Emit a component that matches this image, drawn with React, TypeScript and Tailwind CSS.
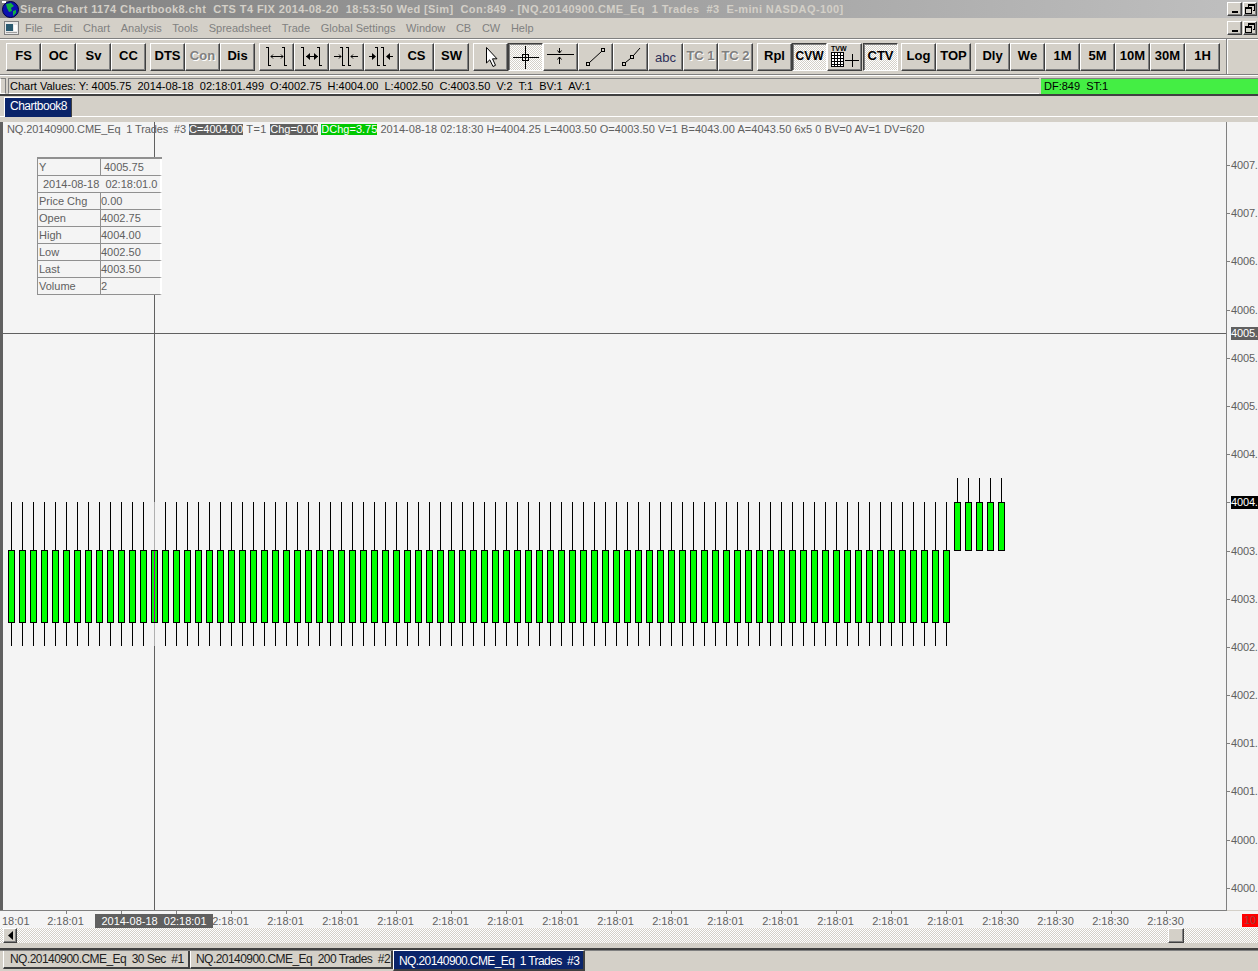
import React from 'react';

const FONT = "font-['Liberation_Sans',Arial,sans-serif]";
const DITHER = 'bg-[image:repeating-conic-gradient(#d4d0c8_0_25%,#ffffff_0_50%)] bg-[length:2px_2px]';
const RAISED = 'border border-t-white border-l-white border-r-[#404040] border-b-[#404040] shadow-[inset_-1px_-1px_0_#808080] bg-[#d4d0c8]';

const menuItems = ['File', 'Edit', 'Chart', 'Analysis', 'Tools', 'Spreadsheet', 'Trade', 'Global Settings', 'Window', 'CB', 'CW', 'Help'];

const priceTicks = ['4007.', '4007.', '4006.', '4006.', '4005.', '4005.', '4004.', '4004.', '4003.', '4003.', '4002.', '4002.', '4001.', '4001.', '4000.', '4000.'];

// the two empty ones sit behind the crosshair's date label
const timeTicks = ['2:18:01', '', '', '2:18:01', '2:18:01', '2:18:01', '2:18:01', '2:18:01', '2:18:01', '2:18:01', '2:18:01', '2:18:01', '2:18:01', '2:18:01', '2:18:01', '2:18:01', '2:18:01', '2:18:30', '2:18:30', '2:18:30', '2:18:30'];

const tableRows = [
  ['Price Chg', '0.00'],
  ['Open', '4002.75'],
  ['High', '4004.00'],
  ['Low', '4002.50'],
  ['Last', '4003.50'],
  ['Volume', '2'],
];

const lowCandles = Array.from({ length: 86 }, (_, i) => 11 + i * 11);
const highCandles = Array.from({ length: 5 }, (_, i) => 957 + i * 11);

function Btn({ children, pressed, tone = 'font-bold text-black' }: { children: React.ReactNode; pressed?: boolean; tone?: string }) {
  return (
    <div
      className={`relative flex h-[28px] w-[35px] shrink-0 items-center justify-center whitespace-nowrap text-[13px] leading-none ${
        pressed
          ? `border border-t-[#404040] border-l-[#404040] border-r-white border-b-white shadow-[inset_1px_1px_0_#808080] ${DITHER}`
          : RAISED
      } ${tone}`}
    >
      {children}
    </div>
  );
}

function Label({ children }: { children: React.ReactNode }) {
  return <span className="pb-[3px]">{children}</span>;
}

function Icon({ children }: { children: React.ReactNode }) {
  return (
    <svg width="33" height="26" viewBox="0 0 33 26" fill="none" stroke="black" shapeRendering="crispEdges">
      {children}
    </svg>
  );
}

function Bars({ x1, x2 }: { x1: number; x2: number }) {
  return (
    <>
      <path d={`M${x1 + 0.5} 3V22M${x1 - 2} 3.5H${x1}M${x1 + 1} 21.5H${x1 + 3}`} />
      <path d={`M${x2 + 0.5} 3V22M${x2 - 2} 3.5H${x2}M${x2 + 1} 21.5H${x2 + 3}`} />
    </>
  );
}

function WindowButtons() {
  return (
    <div className="flex gap-px">
      <div className={`flex h-[14px] w-[15px] items-end justify-center pb-[2px] ${RAISED}`}>
        <div className="h-[2px] w-[6px] bg-black" />
      </div>
      <div className={`flex h-[14px] w-[14px] items-center justify-center ${RAISED}`}>
        <svg width="10" height="10" viewBox="0 0 10 10" fill="none" stroke="black" shapeRendering="crispEdges">
          <path d="M3.5 2.5V0.5H9.5V6.5H7.5M3 1.5H9" />
          <rect x="0.5" y="3.5" width="6" height="6" />
          <path d="M1 4.5H6" />
        </svg>
      </div>
    </div>
  );
}

function Toolbar() {
  const dim = 'font-bold text-[#808080] [text-shadow:1px_1px_0_#ffffff]';
  return (
    <div className="flex h-[37px] shrink-0 items-start border-y border-[#808080] pl-[6px] shadow-[inset_0_1px_0_#ffffff,0_1px_0_#ffffff]">
      <div className="mt-[4px] flex">
        <Btn><Label>FS</Label></Btn>
        <Btn><Label>OC</Label></Btn>
        <Btn><Label>Sv</Label></Btn>
        <Btn><Label>CC</Label></Btn>
      </div>
      <div className="ml-[4px] mt-[4px] flex">
        <Btn><Label>DTS</Label></Btn>
        <Btn tone={dim}><Label>Con</Label></Btn>
        <Btn><Label>Dis</Label></Btn>
      </div>
      <div className="ml-[4px] mt-[4px] flex">
        <Btn>
          <Icon>
            <Bars x1={8} x2={24} />
            <path d="M11 12.5H23M13 10.5L11 12.5L13 14.5M21 10.5L23 12.5L21 14.5" shapeRendering="auto" />
          </Icon>
        </Btn>
        <Btn>
          <Icon>
            <Bars x1={8} x2={24} />
            <path d="M11 12.5H23" strokeWidth="1" />
            <path d="M11 12.5L15 9V16ZM23 12.5L19 9V16Z" fill="black" stroke="none" shapeRendering="auto" />
          </Icon>
        </Btn>
        <Btn>
          <Icon>
            <path d="M12.5 3V22M10 3.5H12M13 21.5H15M18.5 3V22M16 3.5H18M19 21.5H21" />
            <path d="M4 12.5H11M9 10.5L11 12.5L9 14.5M28 12.5H21M23 10.5L21 12.5L23 14.5" shapeRendering="auto" />
          </Icon>
        </Btn>
        <Btn>
          <Icon>
            <path d="M12.5 3V22M10 3.5H12M13 21.5H15M18.5 3V22M16 3.5H18M19 21.5H21" />
            <path d="M4 12.5H8M24 12.5H28" />
            <path d="M11 12.5L7 9V16ZM21 12.5L25 9V16Z" fill="black" stroke="none" shapeRendering="auto" />
          </Icon>
        </Btn>
        <Btn><Label>CS</Label></Btn>
        <Btn><Label>SW</Label></Btn>
      </div>
      <div className="ml-[4px] mt-[4px] flex">
        <Btn>
          <Icon>
            <path d="M12.5 3.5V19L15.8 15.8L19 22.5L21.5 21.3L18.5 14.8H23Z" fill="white" strokeWidth="1" shapeRendering="auto" />
          </Icon>
        </Btn>
        <Btn pressed>
          <Icon>
            <path d="M4 13.5H30M16.5 2V25" />
            <rect x="13.5" y="10.5" width="6" height="6" />
          </Icon>
        </Btn>
        <Btn>
          <Icon>
            <path d="M3 10.5H30M15.5 4V9M15.5 13V20" />
            <path d="M13.5 6.5L15.5 9L17.5 6.5M13.5 15.5L15.5 13L17.5 15.5" shapeRendering="auto" />
          </Icon>
        </Btn>
        <Btn>
          <Icon>
            <rect x="7.5" y="18.5" width="3" height="3" />
            <rect x="22.5" y="4.5" width="3" height="3" />
            <path d="M10.5 18.5L22.5 7.5" shapeRendering="auto" />
          </Icon>
        </Btn>
        <Btn>
          <Icon>
            <rect x="8.5" y="18.5" width="3" height="3" />
            <rect x="16.5" y="11.5" width="3" height="3" />
            <path d="M11.5 18.5L16.5 14.5M19.5 11.5L26 4" shapeRendering="auto" />
          </Icon>
        </Btn>
        <Btn tone="font-normal text-[#30305a]">abc</Btn>
        <Btn tone={dim}><Label>TC 1</Label></Btn>
        <Btn tone={dim}><Label>TC 2</Label></Btn>
      </div>
      <div className="ml-[4px] mt-[4px] flex">
        <Btn><Label>Rpl</Label></Btn>
        <Btn pressed>
          <span className="pb-[2px] text-[12px]">CVW</span>
        </Btn>
        <Btn>
          <svg width="33" height="26" viewBox="0 0 33 26" fill="none" stroke="black" shapeRendering="crispEdges">
            <text x="3" y="6.5" fontSize="7" fontWeight="700" fill="black" stroke="none" fontFamily="Liberation Sans">TVW</text>
            <rect x="3.5" y="8.5" width="12" height="14" fill="white" />
            <path d="M3 11.5H16M3 14.5H16M3 17.5H16M3 20.5H16M6.5 9V23M9.5 9V23M12.5 9V23" />
            <path d="M17 16.5H31M24.5 10V23" />
          </svg>
        </Btn>
      </div>
      <div className="ml-px mt-[4px] flex">
        <Btn pressed><Label>CTV</Label></Btn>
      </div>
      <div className="ml-[3px] mt-[4px] flex">
        <Btn><Label>Log</Label></Btn>
        <Btn><Label>TOP</Label></Btn>
      </div>
      <div className="ml-[4px] mt-[4px] flex">
        <Btn><Label>Dly</Label></Btn>
        <Btn><Label>We</Label></Btn>
        <Btn><Label>1M</Label></Btn>
        <Btn><Label>5M</Label></Btn>
        <Btn><Label>10M</Label></Btn>
        <Btn><Label>30M</Label></Btn>
        <Btn><Label>1H</Label></Btn>
      </div>
      <div className="ml-[6px] w-[2px] self-stretch border-l border-[#808080] bg-white" />
    </div>
  );
}

function ChartValues() {
  return (
    <div className="h-[21px] shrink-0 pt-[3px]">
      <div className="flex h-[18px] border-b-2 border-[#404040]">
        <div className="w-[6px] border border-t-[#808080] border-l-white border-r-[#808080] border-b-white" />
        <div className="ml-[2px] flex w-[1031px] items-center border-t border-l border-[#808080] border-b border-b-white pl-[1px] whitespace-pre text-[11px] leading-none text-black">
          Chart Values: Y: 4005.75  2014-08-18  02:18:01.499  O:4002.75  H:4004.00  L:4002.50  C:4003.50  V:2  T:1  BV:1  AV:1
        </div>
        <div className="ml-[2px] flex flex-1 items-center border-t border-[#808080] bg-[#44ee44] pl-[3px] whitespace-pre text-[11px] leading-none text-black">
          DF:849  ST:1
        </div>
      </div>
    </div>
  );
}

function PlotOverlay() {
  return (
    <svg className="absolute -left-[3px] top-0" width="1226" height="788" viewBox="0 122 1226 788" fill="none" shapeRendering="crispEdges">
      <path d="M3 333.5H1226" stroke="#606060" />
      <path d="M154.5 122V910" stroke="#606060" />
      {lowCandles.map((x) =>
        x === 154 ? (
          <g key={x}>
            <path d="M154.5 502V646" stroke="#b0b0b0" />
            <rect x="151.5" y="550.5" width="6" height="72" fill="#00ff00" stroke="black" />
            <path d="M154.5 551V622" stroke="#a000a0" />
          </g>
        ) : (
          <g key={x}>
            <path d={`M${x + 0.5} 502V646`} stroke="black" />
            <rect x={x - 2.5} y="550.5" width="6" height="72" fill="#00ff00" stroke="black" />
          </g>
        ),
      )}
      {highCandles.map((x) => (
        <g key={x}>
          <path d={`M${x + 0.5} 478V502`} stroke="black" />
          <rect x={x - 2.5} y="502.5" width="6" height="48" fill="#00ff00" stroke="black" />
        </g>
      ))}
    </svg>
  );
}

function ValuesTable() {
  const left = 'flex h-[17px] w-[63px] shrink-0 items-center border-r border-b border-[#909090] pl-[1px]';
  const right = 'flex h-[17px] flex-1 items-center border-r-2 border-b border-r-white border-b-[#909090]';
  return (
    <div className="absolute left-[34px] top-[35px] w-[125px] border-t-2 border-l border-[#909090] bg-[#f4f4f4] text-[11px] leading-none text-[#606060]">
      <div className="flex">
        <div className={left}>Y</div>
        <div className={`${right} pl-[3px]`}>4005.75</div>
      </div>
      <div className={`${right} whitespace-pre pl-[5px]`}>2014-08-18  02:18:01.0</div>
      {tableRows.map(([label, value]) => (
        <div key={label} className="flex">
          <div className={left}>{label}</div>
          <div className={right}>{value}</div>
        </div>
      ))}
    </div>
  );
}

function Chart() {
  return (
    <div className="flex h-[789px] shrink-0 flex-col">
      <div className="flex h-[788px]">
        <div className="relative w-[1226px] overflow-hidden border-l-[3px] border-[#606060] bg-[#f4f4f4]">
          <PlotOverlay />
          <div className="relative flex h-[15px] items-center pl-[4px] whitespace-pre text-[11px] leading-none text-[#606060]">
            <span className="tracking-[-0.12px]">NQ.20140900.CME_Eq  1 Trades  #3 </span>
            <span className="bg-[#606060] text-white">C=4004.00</span>
            <span className="tracking-[0.4px]"> T=1 </span>
            <span className="bg-[#606060] text-white">Chg=0.00</span>
            <span> </span>
            <span className="bg-[#00c800] text-white">DChg=3.75</span>
            <span className="tracking-[0.04px]"> 2014-08-18 02:18:30 H=4004.25 L=4003.50 O=4003.50 V=1 B=4043.00 A=4043.50 6x5 0 BV=0 AV=1 DV=620</span>
          </div>
          <ValuesTable />
        </div>
        <div className="relative flex-1 overflow-hidden border-l border-[#808080] bg-[#f4f4f4] pl-[4px] pt-[37px] text-[11px] text-[#606060] tracking-[-0.15px]">
          {priceTicks.map((p, i) => (
            <div key={i} className="relative flex h-[48.2px] items-start leading-[13px]">
              <div className="absolute -left-[4px] top-[6px] h-px w-[3px] bg-[#808080]" />
              <span className={i === 7 ? 'bg-black text-white' : ''}>{p}</span>
            </div>
          ))}
          <div className="absolute left-[4px] top-[205px] bg-[#606060] leading-[13px] text-white">4005.</div>
        </div>
      </div>
      <div className="h-px w-[1227px] bg-[#808080]" />
    </div>
  );
}

function TimeAxis() {
  return (
    <div className="relative flex h-[17px] shrink-0 overflow-hidden bg-[#f4f4f4] pl-[38px] text-[11px] leading-none text-[#606060]">
      <span className="absolute left-[2px] top-[5px]">18:01</span>
      {timeTicks.map((t, i) => (
        <div key={i} className="relative flex h-full w-[55px] shrink-0 justify-center pt-[5px]">
          <div className="absolute left-1/2 top-0 h-[3px] w-px bg-[#808080]" />
          {t}
        </div>
      ))}
      <div className="absolute left-[95px] top-[3px] flex h-[14px] w-[118px] items-center justify-center whitespace-pre bg-[#606060] text-white">
        2014-08-18  02:18:01
      </div>
      <div className="absolute left-[1242px] top-[3px] flex h-[13px] w-[16px] items-center justify-center bg-[#ff0000] text-[#a04040]">10</div>
    </div>
  );
}

function ScrollBar() {
  return (
    <div className={`relative h-[15px] shrink-0 ${DITHER}`}>
      <div className={`absolute left-[3px] top-0 flex h-[15px] w-[14px] items-center justify-center ${RAISED}`}>
        <svg width="5" height="9" viewBox="0 0 5 9" fill="black">
          <path d="M5 0V9L0 4.5Z" />
        </svg>
      </div>
      <div className={`absolute left-[1168px] top-0 h-[15px] w-[16px] ${RAISED}`} />
    </div>
  );
}

function BottomTabs() {
  return (
    <div className="flex flex-1 items-start border-t-2 border-[#404040] pl-[3px] shadow-[inset_0_1px_0_#808080]">
      <div className="mt-px flex h-[18px] w-[187px] items-center whitespace-pre border-l border-r-2 border-b-2 border-l-white border-r-[#404040] border-b-[#404040] pl-[6px] text-[12px] leading-none text-[#202020] tracking-[-0.55px]">
        NQ.20140900.CME_Eq  30 Sec  #1
      </div>
      <div className="mt-px flex h-[18px] w-[203px] items-center whitespace-pre border-l border-r-2 border-b-2 border-l-white border-r-[#404040] border-b-[#404040] pl-[5px] text-[12px] leading-none text-[#202020] tracking-[-0.55px]">
        NQ.20140900.CME_Eq  200 Trades  #2
      </div>
      <div className="flex h-[21px] w-[192px] items-center whitespace-pre border-l border-t border-r-2 border-b-2 border-l-white border-t-white border-r-[#404040] border-b-[#404040] bg-[#0a246a] pl-[5px] pt-px text-[12px] leading-none text-white tracking-[-0.6px]">
        NQ.20140900.CME_Eq  1 Trades  #3
      </div>
    </div>
  );
}

export default function App() {
  return (
    <div className={`flex h-[971px] w-[1258px] flex-col overflow-hidden bg-[#d4d0c8] ${FONT}`}>
      {/* title bar */}
      <div className="flex h-[18px] shrink-0 items-center bg-gradient-to-r from-[#808080] to-[#c0c0c0] pr-px">
        <svg className="ml-[2px] shrink-0" width="17" height="17" viewBox="0 0 17 17">
          <circle cx="8.5" cy="8.5" r="8" fill="#0a10b0" stroke="#000040" />
          <path d="M4 3L9 2L12 5L9 7L10 10L7 11L5 7ZM11 10L14 9L14 12L11 15Z" fill="#10b040" />
          <path d="M0 0H4V2H0Z" fill="white" />
        </svg>
        <span className="ml-px whitespace-pre text-[11px] font-bold leading-none text-[#d4d0c8] tracking-[0.395px]">
          Sierra Chart 1174 Chartbook8.cht  CTS T4 FIX 2014-08-20  18:53:50 Wed [Sim]  Con:849 - [NQ.20140900.CME_Eq  1 Trades  #3  E-mini NASDAQ-100]
        </span>
        <div className="ml-auto">
          <WindowButtons />
        </div>
      </div>
      {/* menu */}
      <div className="flex h-[20px] shrink-0 items-center pl-[4px] pr-px">
        <svg width="15" height="14" viewBox="0 0 15 14" shapeRendering="crispEdges">
          <rect x="0.5" y="0.5" width="14" height="13" fill="#e8e8e8" stroke="#808080" />
          <rect x="2" y="3" width="7" height="7" fill="#2a5a70" />
          <rect x="10" y="4" width="3" height="6" fill="#ffffff" />
          <rect x="2" y="11" width="11" height="1" fill="#a0a0a0" />
        </svg>
        <div className="ml-[6px] flex gap-[10.7px] text-[11px] leading-none text-[#808080]">
          {menuItems.map((m) => (
            <span key={m}>{m}</span>
          ))}
        </div>
        <div className="ml-auto">
          <WindowButtons />
        </div>
      </div>
      <Toolbar />
      <ChartValues />
      {/* chartbook tabs */}
      <div className="h-[26px] shrink-0">
        <div className="flex h-[21px] items-end border-b border-white pl-[4px]">
          <div className="mb-[-1px] flex h-[20px] w-[68px] items-center justify-center border-t border-l border-white bg-[#0a246a] pb-[3px] text-[12px] leading-none text-white tracking-[-0.5px] shadow-[inset_-1px_0_0_#404040]">
            Chartbook8
          </div>
        </div>
      </div>
      <Chart />
      <TimeAxis />
      <ScrollBar />
      <div className="h-[5px] shrink-0" />
      <BottomTabs />
    </div>
  );
}
